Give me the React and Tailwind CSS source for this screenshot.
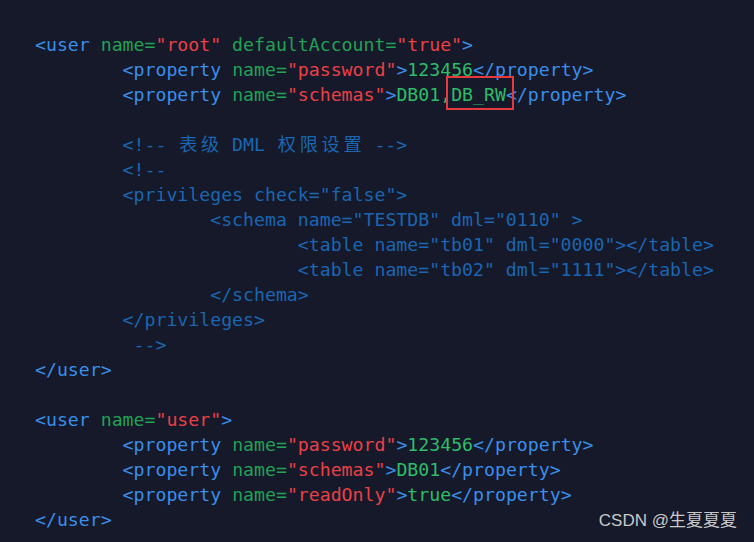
import React from "react";

const T = ({ children }) => <span className="text-[#3b8eea]">{children}</span>;
const A = ({ children }) => <span className="text-[#23a155]">{children}</span>;
const V = ({ children }) => <span className="text-[#ea4047]">{children}</span>;
const X = ({ children }) => <span className="text-[#2ebd68]">{children}</span>;
const C = ({ children }) => <span className="text-[#1b66b2]">{children}</span>;
const K = ({ children }) => (
  <span className="inline-block w-[2ch] text-center">{children}</span>
);

const Line = ({ indent = 0, children }) => (
  <div className="h-[25px] leading-[25px] whitespace-pre">
    {" ".repeat(indent)}
    {children}
  </div>
);

export default function App() {
  return (
    <div className="relative w-[754px] h-[542px] bg-[#151929] overflow-hidden">
      <div
        className="pl-[35px] pt-[32px] text-[18.2px]"
        style={{ fontFamily: '"DejaVu Sans Mono", "Noto Sans CJK SC", monospace' }}
      >
        <Line>
          <T>&lt;user</T> <A>name=</A><V>"root"</V> <A>defaultAccount=</A><V>"true"</V><T>&gt;</T>
        </Line>
        <Line indent={8}>
          <T>&lt;property</T> <A>name=</A><V>"password"</V><T>&gt;</T><X>123456</X><T>&lt;/property&gt;</T>
        </Line>
        <Line indent={8}>
          <T>&lt;property</T> <A>name=</A><V>"schemas"</V><T>&gt;</T><X>DB01,</X>
          <span className="relative">
            <X>DB_RW</X>
            <span className="absolute -left-[5px] -right-[8px] -top-[8px] -bottom-[5px] border-2 border-[#e5393b]" />
          </span>
          <T>&lt;/property&gt;</T>
        </Line>
        <Line />
        <Line indent={8}>
          <C>
            &lt;!-- <K>表</K><K>级</K> DML <K>权</K><K>限</K><K>设</K><K>置</K> --&gt;
          </C>
        </Line>
        <Line indent={8}>
          <C>&lt;!--</C>
        </Line>
        <Line indent={8}>
          <C>&lt;privileges check="false"&gt;</C>
        </Line>
        <Line indent={16}>
          <C>&lt;schema name="TESTDB" dml="0110" &gt;</C>
        </Line>
        <Line indent={24}>
          <C>&lt;table name="tb01" dml="0000"&gt;&lt;/table&gt;</C>
        </Line>
        <Line indent={24}>
          <C>&lt;table name="tb02" dml="1111"&gt;&lt;/table&gt;</C>
        </Line>
        <Line indent={16}>
          <C>&lt;/schema&gt;</C>
        </Line>
        <Line indent={8}>
          <C>&lt;/privileges&gt;</C>
        </Line>
        <Line indent={9}>
          <C>--&gt;</C>
        </Line>
        <Line>
          <T>&lt;/user&gt;</T>
        </Line>
        <Line />
        <Line>
          <T>&lt;user</T> <A>name=</A><V>"user"</V><T>&gt;</T>
        </Line>
        <Line indent={8}>
          <T>&lt;property</T> <A>name=</A><V>"password"</V><T>&gt;</T><X>123456</X><T>&lt;/property&gt;</T>
        </Line>
        <Line indent={8}>
          <T>&lt;property</T> <A>name=</A><V>"schemas"</V><T>&gt;</T><X>DB01</X><T>&lt;/property&gt;</T>
        </Line>
        <Line indent={8}>
          <T>&lt;property</T> <A>name=</A><V>"readOnly"</V><T>&gt;</T><X>true</X><T>&lt;/property&gt;</T>
        </Line>
        <Line>
          <T>&lt;/user&gt;</T>
        </Line>
      </div>
      <div
        className="absolute right-[17px] bottom-[11px] text-[17px] leading-[20px] text-[#c9c9c9]"
        style={{ fontFamily: '"Liberation Sans", "Noto Sans CJK SC", sans-serif' }}
      >
        CSDN @生夏夏夏
      </div>
    </div>
  );
}
